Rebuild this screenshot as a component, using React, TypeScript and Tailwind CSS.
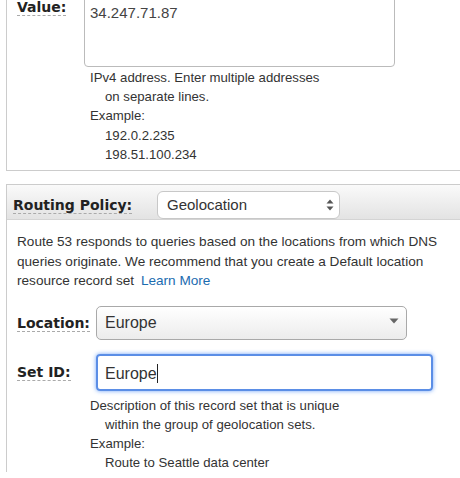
import React from 'react';

const labelCls =
  "block w-fit font-['DejaVu_Sans',Verdana,sans-serif] font-bold text-[14px] leading-[16px] text-[#222] border-b border-dashed border-[#aaa]";

function UpDownArrows() {
  return (
    <svg width="8" height="12" viewBox="0 0 8 12" className="text-[#555]">
      <path d="M4 0.5 L7.5 4.5 L0.5 4.5 Z" fill="currentColor" />
      <path d="M4 11.5 L7.5 7.5 L0.5 7.5 Z" fill="currentColor" />
    </svg>
  );
}

function DownArrow() {
  return (
    <svg width="10" height="6" viewBox="0 0 10 6" className="text-[#666]">
      <path d="M0.5 0.5 L9.5 0.5 L5 5.5 Z" fill="currentColor" />
    </svg>
  );
}

export default function App() {
  return (
    <div className="w-[460px] h-[478px] overflow-hidden bg-white font-['Liberation_Sans',Arial,sans-serif] text-[#333]">
      {/* value panel, top cut off by scroll */}
      <div className="-mt-[4px] ml-[6px] w-[470px] border-l border-b border-[#ccc] pl-[10px] pb-[6px]">
        <div className="flex">
          <div className="w-[67px] pt-[3px]">
            <span className={labelCls}>Value:</span>
          </div>
          <div>
            <div className="w-[311px] h-[71px] border border-[#bbb] rounded-[4px] pl-[5px] pt-[7px] text-[15px] leading-[18px] text-[#444]">
              34.247.71.87
            </div>
            <div className="ml-[6px] mt-[1px] text-[13.2px] leading-[19.2px] text-[#333]">
              <div>IPv4 address. Enter multiple addresses</div>
              <div className="pl-[15px]">on separate lines.</div>
              <div>Example:</div>
              <div className="pl-[15px]">192.0.2.235</div>
              <div className="pl-[15px]">198.51.100.234</div>
            </div>
          </div>
        </div>
      </div>

      {/* routing policy panel */}
      <div className="mt-[13px] ml-[6px] w-[470px] border-l border-t border-[#ccc]">
        <div className="h-[35px] pt-[6px] pl-[6px] flex items-center bg-gradient-to-b from-[#fafafa] to-[#e3e3e3] border-b border-[#d4d4d4]">
          <div className="w-[144px]">
            <span className={labelCls}>Routing Policy:</span>
          </div>
          <div className="w-[183px] h-[28px] bg-white border border-[#c8c8c8] rounded-[6px] flex items-center justify-between pl-[9px] pr-[5px] text-[15px] text-[#333]">
            <span>Geolocation</span>
            <UpDownArrows />
          </div>
        </div>

        <div className="pl-[10px] pt-[12px]">
          <p className="text-[13.6px] leading-[19.7px] text-[#333] whitespace-nowrap">
            Route 53 responds to queries based on the locations from which DNS
            <br />
            queries originate. We recommend that you create a Default location
            <br />
            resource record set <a className="ml-[3px] text-[#1b6cb0]">Learn More</a>
          </p>

          <div className="mt-[15px] flex items-center">
            <div className="w-[79px]">
              <span className={labelCls}>Location:</span>
            </div>
            <div className="w-[311px] h-[34px] border border-[#a9a9a9] rounded-[5px] bg-gradient-to-b from-white to-[#ececec] flex items-center justify-between pl-[8px] pr-[7px] text-[16px] text-[#333]">
              <span>Europe</span>
              <span className="-mt-[5px]">
                <DownArrow />
              </span>
            </div>
          </div>

          <div className="mt-[14px] flex items-center">
            <div className="w-[79px]">
              <span className={labelCls}>Set ID:</span>
            </div>
            <div className="w-[337px] h-[37px] border-2 border-[#5b8ee6] rounded-[4px] shadow-[0_0_4px_rgba(76,141,246,0.8)] flex items-center pl-[7px] pt-[2px] text-[16px] text-[#333]">
              <span>Europe</span>
              <span className="w-px h-[19px] bg-[#222]" />
            </div>
          </div>

          <div className="ml-[73px] mt-[5px] text-[13.2px] leading-[19px] text-[#333]">
            <div>Description of this record set that is unique</div>
            <div className="pl-[15px]">within the group of geolocation sets.</div>
            <div>Example:</div>
            <div className="pl-[15px]">Route to Seattle data center</div>
          </div>
        </div>
      </div>
    </div>
  );
}
